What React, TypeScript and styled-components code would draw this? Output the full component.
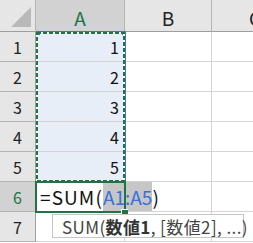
import React from 'react'
import styled, { createGlobalStyle } from 'styled-components'

const GRID = '#d4d4d4'
const HEAD_BG = '#e6e6e6'
const HEAD_SEL_BG = '#d2d2d2'
const HEAD_LINE = '#b4b4b4'
const GREEN = '#217346'
const BLUE = '#4472c4'
const FONT_STACK = '"Noto Sans CJK JP", "Noto Sans", sans-serif'

const GlobalStyle = createGlobalStyle`
  html, body {
    margin: 0;
    padding: 0;
    background: #fff;
    overflow: hidden;
  }
`

const Sheet = styled.div`
  position: relative;
  width: 253px;
  height: 243px;
  display: grid;
  grid-template-columns: 36px 89px 87px 87px;
  grid-template-rows: 32px repeat(7, 30px);
  font-family: ${FONT_STACK};
  overflow: hidden;
`

const Corner = styled.div`
  position: relative;
  background: ${HEAD_BG};
  border-right: 1px solid ${HEAD_LINE};
  border-bottom: 1px solid #9e9e9e;
  box-sizing: border-box;

  &::after {
    content: '';
    position: absolute;
    right: 4px;
    bottom: 4px;
    width: 0;
    height: 0;
    border-left: 20px solid transparent;
    border-bottom: 20px solid #b9b9b9;
  }
`

const ColHeader = styled.div<{ $selected?: boolean }>`
  display: flex;
  align-items: center;
  justify-content: center;
  box-sizing: border-box;
  padding-top: 3px;
  background: ${({ $selected }) => ($selected ? HEAD_SEL_BG : HEAD_BG)};
  border-right: 1px solid ${HEAD_LINE};
  border-bottom: 1px solid #9e9e9e;
  color: ${({ $selected }) => ($selected ? GREEN : '#222')};
  font-size: 19px;
  line-height: 1;
`

const RowHeader = styled.div<{ $selected?: boolean }>`
  display: flex;
  align-items: center;
  justify-content: center;
  box-sizing: border-box;
  background: ${({ $selected }) => ($selected ? HEAD_SEL_BG : HEAD_BG)};
  border-right: 1px solid #9e9e9e;
  border-bottom: 1px solid ${HEAD_LINE};
  color: ${({ $selected }) => ($selected ? GREEN : '#222')};
  font-size: 16px;
  line-height: 1;
`

const Cell = styled.div<{ $fill?: boolean; $overflow?: boolean }>`
  position: relative;
  display: flex;
  align-items: center;
  justify-content: flex-end;
  box-sizing: border-box;
  padding: 0 5px;
  background: ${({ $fill }) => ($fill ? '#e8eef8' : 'transparent')};
  border-right: 1px solid ${GRID};
  border-bottom: 1px solid ${GRID};
  color: #111;
  font-size: 16px;
  line-height: 1;
  white-space: nowrap;
  ${({ $overflow }) =>
    $overflow && 'justify-content: flex-start; overflow: visible; z-index: 2; padding-left: 4px;'}
`

const Formula = styled.span`
  font-size: 19px;
  color: #111;
  line-height: 29px;
`

const FuncPart = styled.span`
  letter-spacing: 1.1px;
`

const RefText = styled.span`
  color: #3a6fd8;
  background: #c6c6c6;
  padding: 1px 0;
`

const RangeBox = styled.div`
  position: absolute;
  left: 36px;
  top: 31px;
  width: 90px;
  height: 151px;
  box-sizing: border-box;
  border: 1px solid ${BLUE};
  pointer-events: none;
  z-index: 3;
`

const RangeHandle = styled.span<{ $side: 'left' | 'right' }>`
  position: absolute;
  top: 0;
  ${({ $side }) => ($side === 'left' ? 'left: -1px;' : 'right: -1px;')}
  width: 4px;
  height: 3px;
  background: ${BLUE};
`

const Ants = styled.svg`
  position: absolute;
  left: 35px;
  top: 31px;
  overflow: visible;
  pointer-events: none;
  z-index: 4;
`

const ActiveCell = styled.div`
  position: absolute;
  left: 35px;
  top: 181px;
  width: 91px;
  height: 32px;
  box-sizing: border-box;
  border: 2px solid ${GREEN};
  pointer-events: none;
  z-index: 5;
`

const FillHandle = styled.span`
  position: absolute;
  right: -4px;
  bottom: -4px;
  width: 6px;
  height: 5px;
  background: ${GREEN};
  border-left: 1px solid #fff;
  border-top: 1px solid #fff;
`

const Tooltip = styled.div`
  position: absolute;
  left: 52px;
  top: 214px;
  width: 192px;
  height: 24px;
  box-sizing: border-box;
  display: flex;
  align-items: center;
  padding-left: 9px;
  background: #fff;
  border: 1px solid #c6c6c6;
  color: #444;
  font-family: ${FONT_STACK};
  font-size: 17px;
  letter-spacing: 0.4px;
  white-space: nowrap;
  z-index: 6;
`

const Bold = styled.b`
  font-weight: 700;
  color: #333;
`

const columns = ['A', 'B', 'C']
const rows = [1, 2, 3, 4, 5, 6, 7]

export default function App() {
  return (
    <>
      <GlobalStyle />
      <Sheet>
        <Corner />
        {columns.map((c) => (
          <ColHeader key={c} $selected={c === 'A'}>
            {c}
          </ColHeader>
        ))}
        {rows.map((r) => (
          <React.Fragment key={r}>
            <RowHeader $selected={r === 6}>{r}</RowHeader>
            {r === 6 ? (
              <Cell $overflow>
                <Formula>
                  <FuncPart>=SUM(</FuncPart>
                  <RefText>A1:A5</RefText>)
                </Formula>
              </Cell>
            ) : (
              <Cell $fill={r <= 5}>{r <= 5 ? r : ''}</Cell>
            )}
            <Cell />
            <Cell />
          </React.Fragment>
        ))}

        <RangeBox>
          <RangeHandle $side="left" />
          <RangeHandle $side="right" />
        </RangeBox>
        <Ants width={91} height={152}>
          <rect x={2} y={2} width={87} height={148} fill="none" stroke="#fff" strokeWidth={2} />
          <rect
            x={2}
            y={2}
            width={87}
            height={148}
            fill="none"
            stroke={GREEN}
            strokeWidth={2}
            strokeDasharray="4 2"
          />
        </Ants>
        <ActiveCell>
          <FillHandle />
        </ActiveCell>

        <Tooltip>
          SUM(<Bold>数値1</Bold>, [数値2], ...)
        </Tooltip>
      </Sheet>
    </>
  )
}
